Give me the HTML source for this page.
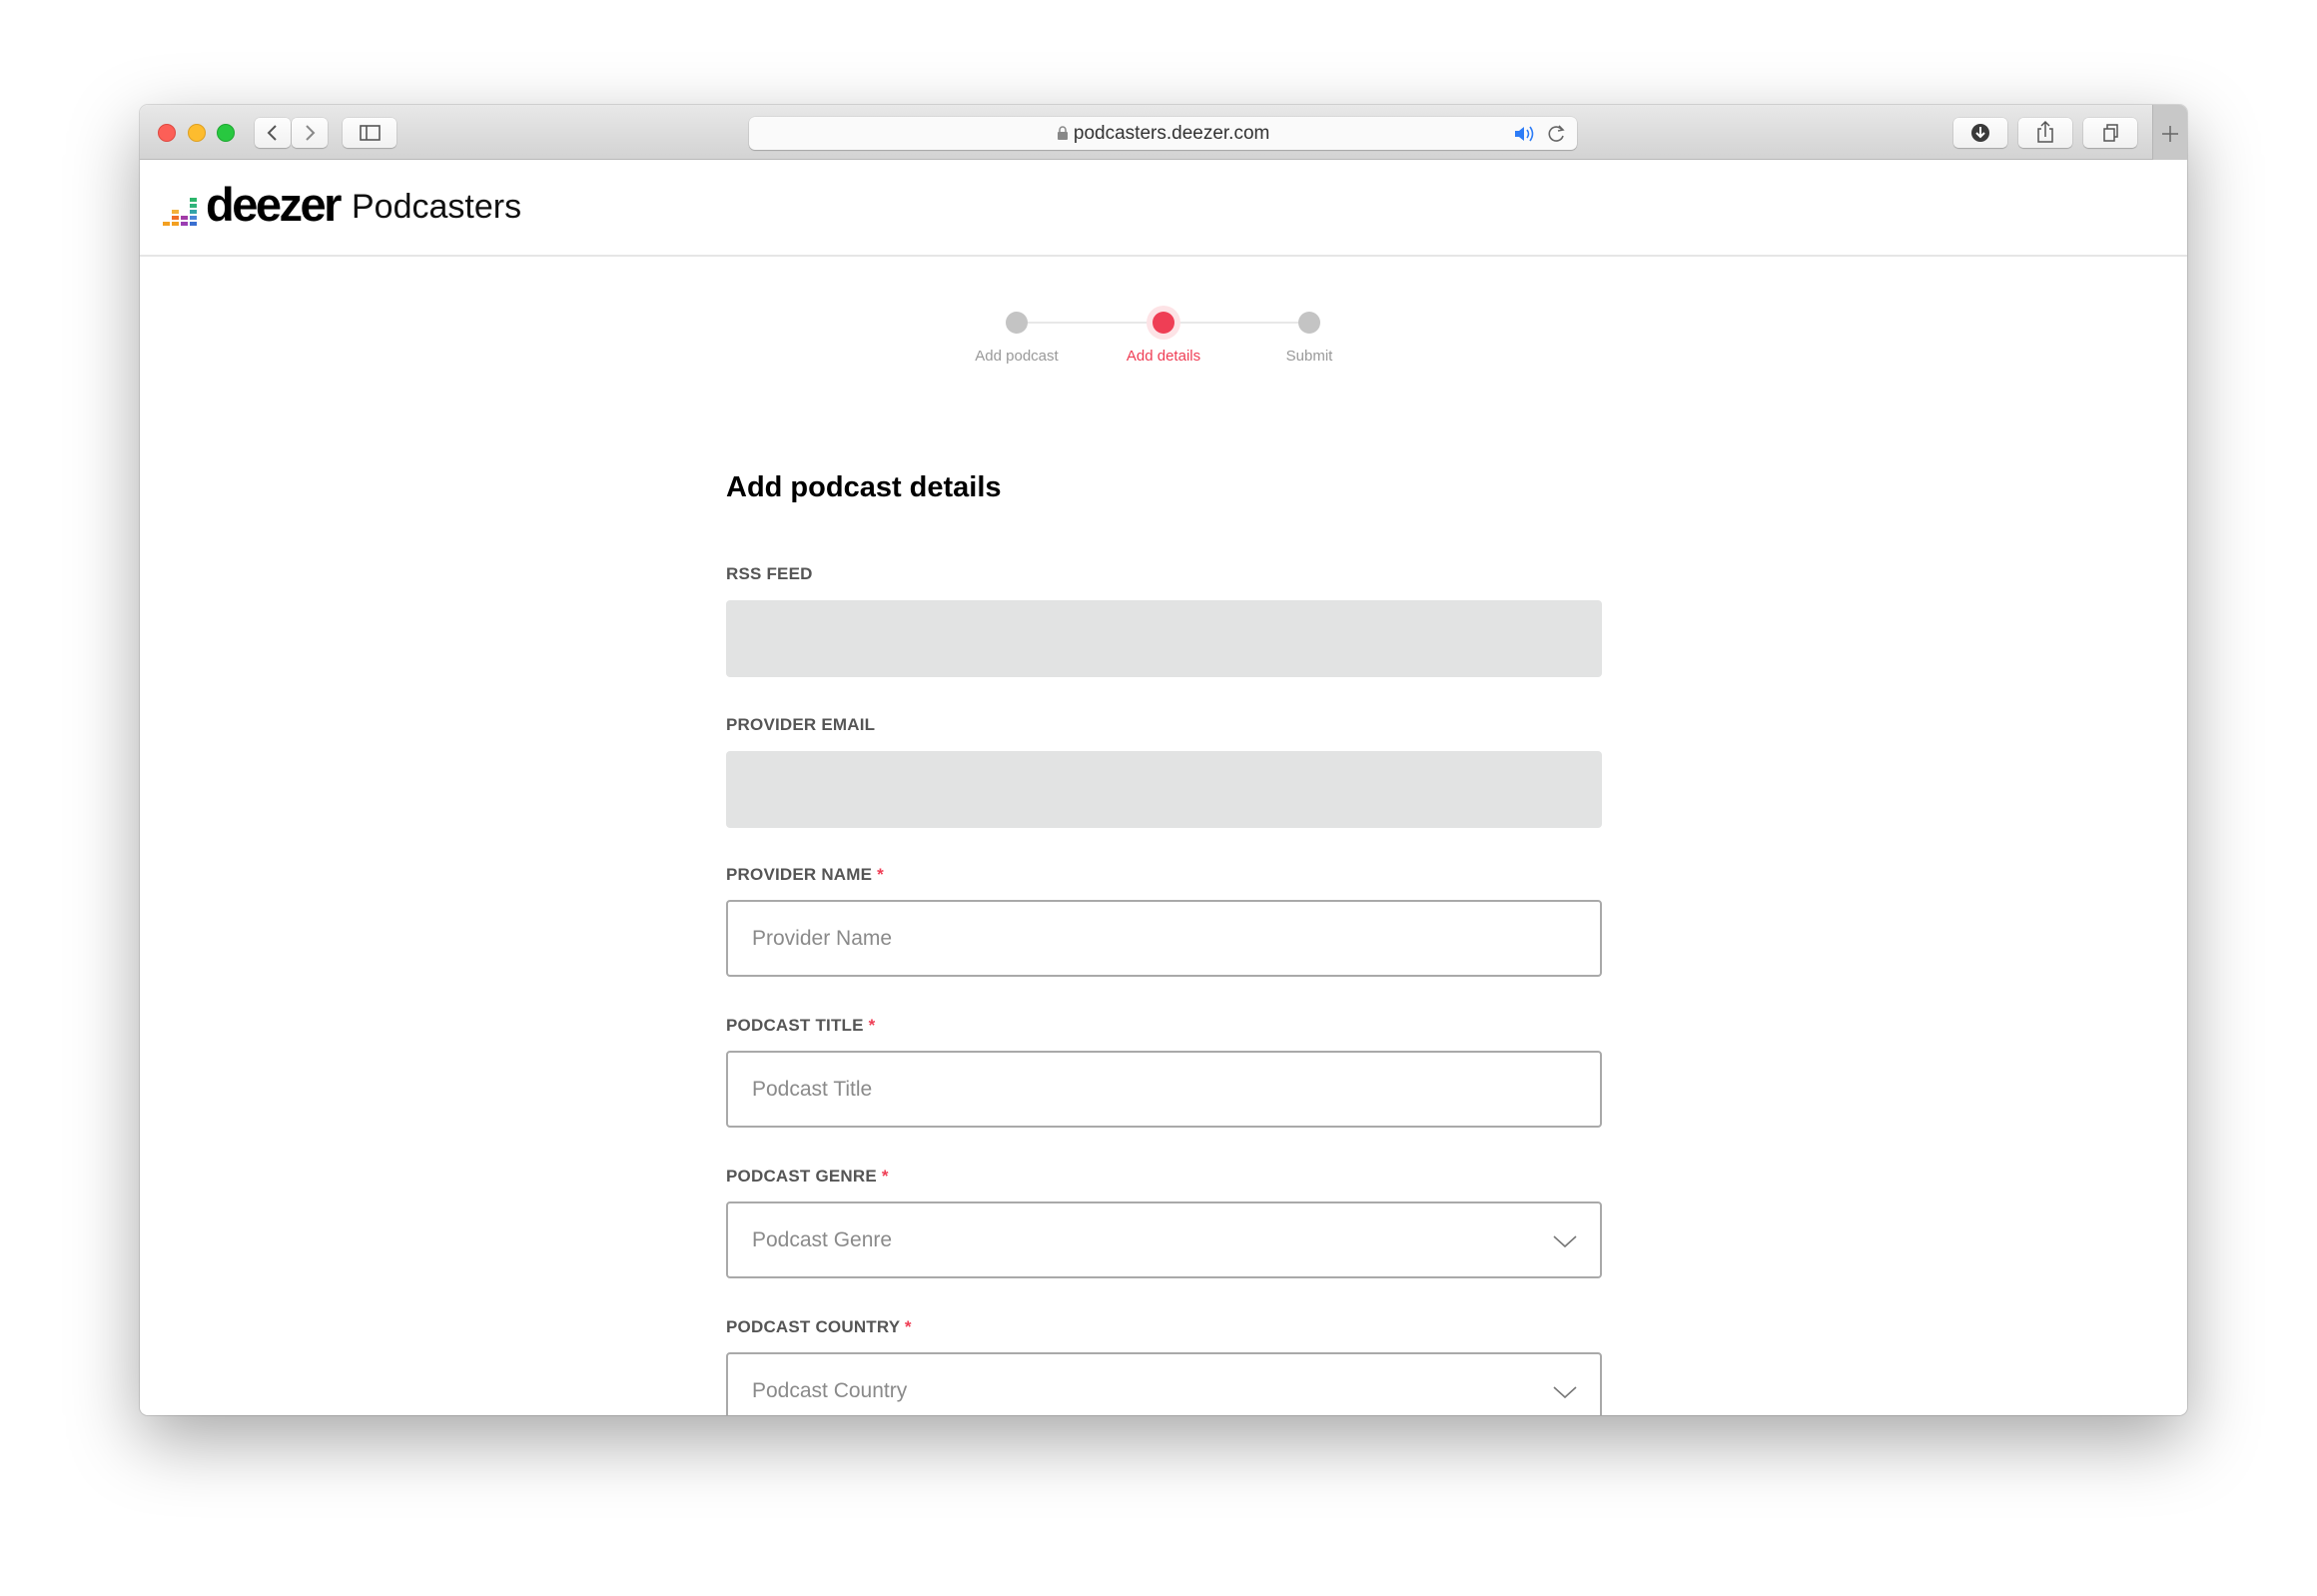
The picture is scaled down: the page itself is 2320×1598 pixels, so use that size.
<!DOCTYPE html>
<html><head><meta charset="utf-8"><style>
*{box-sizing:border-box;margin:0;padding:0}
html,body{width:2320px;height:1598px;background:#fff;overflow:hidden;font-family:"Liberation Sans",sans-serif}
.win{position:absolute;left:140px;top:105px;width:2050px;height:1312px;background:#fff;border-radius:8px;overflow:hidden;box-shadow:0 25px 70px rgba(0,0,0,.35),0 0 0 1px rgba(0,0,0,.12)}
.tb{position:absolute;left:0;top:0;width:100%;height:55px;background:linear-gradient(#e8e8e8,#d3d3d3);border-bottom:1px solid #b8b8b8}
.dot{position:absolute;top:19px;width:18px;height:18px;border-radius:50%}
.btn{position:absolute;top:13px;height:30px;background:linear-gradient(#fdfdfd,#f1f1f1);border-radius:5px;box-shadow:0 1px 1px rgba(0,0,0,.2),0 0 0 .5px rgba(0,0,0,.1)}
.url{position:absolute;left:610px;top:12px;width:829px;height:33px;background:#fafafa;border-radius:6px;box-shadow:0 1px 1px rgba(0,0,0,.2),0 0 0 .5px rgba(0,0,0,.1);font-size:19px;color:#333;text-align:center;line-height:33px}
.hdr{position:absolute;top:55px;left:0;width:100%;height:97px;border-bottom:2px solid #e6e6e6}
.abs{position:absolute}
.lbl{position:absolute;left:587px;font-size:17px;font-weight:bold;color:#555;letter-spacing:.2px}
.lbl b{color:#ef3e55}
.inp{position:absolute;left:587px;width:877px;height:77px;border-radius:4px}
.gray{background:#e2e3e3}
.box{border:2px solid #a9a9a9;background:#fff;font-size:21px;color:#8a8a8a;padding-left:24px;line-height:73px}
.chev{position:absolute;right:22px;top:31px}
.st{position:absolute;font-size:15px;color:#999;text-align:center;width:140px}
</style></head><body>
<div class="win">
 <div class="tb">
  <div class="dot" style="left:18px;background:#fc5f57;border:1px solid #de4a42"></div>
  <div class="dot" style="left:48px;background:#fdbc2e;border:1px solid #dda024"></div>
  <div class="dot" style="left:77px;background:#28c840;border:1px solid #1fa831"></div>
  <div class="btn" style="left:115px;width:36px"><svg width="36" height="30"><path d="M21 8l-7 7 7 7" fill="none" stroke="#555" stroke-width="2"/></svg></div>
  <div class="btn" style="left:152px;width:36px"><svg width="36" height="30"><path d="M15 8l7 7-7 7" fill="none" stroke="#888" stroke-width="2"/></svg></div>
  <div class="btn" style="left:203px;width:54px"><svg width="54" height="30"><rect x="18" y="8" width="19" height="14" fill="none" stroke="#555" stroke-width="1.6"/><line x1="24" y1="8" x2="24" y2="22" stroke="#555" stroke-width="1.6"/></svg></div>
  <div class="url"><svg width="12" height="16" style="vertical-align:-2px"><path d="M3 7V5a3 3 0 0 1 6 0v2" fill="none" stroke="#888" stroke-width="1.5"/><rect x="1" y="7" width="10" height="8" rx="1" fill="#888"/></svg> podcasters.deezer.com
   <svg class="abs" style="right:40px;top:7px" width="24" height="20"><path d="M2 7h4l5-4v14l-5-4H2z" fill="#2d7cf6"/><path d="M14 6q3 4 0 8M17 3q5 7 0 14" fill="none" stroke="#2d7cf6" stroke-width="1.6"/></svg>
   <svg class="abs" style="right:10px;top:7px" width="20" height="20"><path d="M15 6a7 7 0 1 0 1 6" fill="none" stroke="#666" stroke-width="1.6"/><path d="M12 2l4 4-5 1" fill="none" stroke="#666" stroke-width="1.6"/></svg>
  </div>
  <div class="btn" style="left:1816px;width:54px"><svg width="54" height="30"><circle cx="27" cy="15" r="9" fill="#3a3a3a"/><path d="M27 9v10M23 15l4 4 4-4" fill="none" stroke="#fff" stroke-width="2"/></svg></div>
  <div class="btn" style="left:1881px;width:54px"><svg width="54" height="30"><path d="M23 11h-3v13h14V11h-3" fill="none" stroke="#555" stroke-width="1.5"/><path d="M27 19V4M23 8l4-4 4 4" fill="none" stroke="#555" stroke-width="1.5"/></svg></div>
  <div class="btn" style="left:1946px;width:54px"><svg width="54" height="30"><rect x="21" y="11" width="10" height="12" fill="none" stroke="#555" stroke-width="1.5"/><path d="M24 11V7h10v12h-3" fill="none" stroke="#555" stroke-width="1.5"/></svg></div>
  <div class="abs" style="left:2015px;top:0;width:35px;height:55px;background:#c8c8c8;border-left:1px solid #b5b5b5"><svg width="35" height="55"><path d="M17 21v16M9 29h16" stroke="#666" stroke-width="1.5"/></svg></div>
 </div>
 <div class="hdr">
  <svg class="abs" style="left:23px;top:37px" width="40" height="30">
   <rect x="0" y="25" width="7" height="4" fill="#f3a021"/>
   <rect x="9" y="25" width="7" height="4" fill="#f3a021"/><rect x="9" y="19" width="7" height="4" fill="#ef6d27"/><rect x="9" y="13" width="7" height="4" fill="#f3b13a"/>
   <rect x="18" y="25" width="7" height="4" fill="#9b3eb3"/><rect x="18" y="19" width="7" height="4" fill="#a23ba7"/>
   <rect x="27" y="25" width="7" height="4" fill="#3a6fd0"/><rect x="27" y="19" width="7" height="4" fill="#4a84d8"/><rect x="27" y="13" width="7" height="4" fill="#33a3a8"/><rect x="27" y="7" width="7" height="4" fill="#2fb37a"/><rect x="27" y="1" width="7" height="4" fill="#2cb56b"/>
  </svg>
  <div class="abs" style="left:66px;top:17px;font-size:47px;font-weight:bold;letter-spacing:-2.5px;color:#000">deezer</div>
  <div class="abs" style="left:212px;top:28px;font-size:34px;color:#111">Podcasters</div>
 </div>
 <svg class="abs" style="left:860px;top:200px" width="480" height="40">
  <line x1="18" y1="18" x2="311" y2="18" stroke="#e8e8e8" stroke-width="2"/>
  <circle cx="18" cy="18" r="11" fill="#c4c4c4"/>
  <circle cx="165" cy="18" r="17" fill="#fde3e6"/>
  <circle cx="165" cy="18" r="11" fill="#ef3e55"/>
  <circle cx="311" cy="18" r="11" fill="#c4c4c4"/>
 </svg>
 <div class="st" style="left:808px;top:243px">Add podcast</div>
 <div class="st" style="left:955px;top:243px;color:#ef3e55">Add details</div>
 <div class="st" style="left:1101px;top:243px">Submit</div>
 <div class="abs" style="left:587px;top:367px;font-size:29px;font-weight:bold;color:#000">Add podcast details</div>
 <div class="lbl" style="top:460px">RSS FEED</div>
 <div class="inp gray" style="top:496px"></div>
 <div class="lbl" style="top:611px">PROVIDER EMAIL</div>
 <div class="inp gray" style="top:647px"></div>
 <div class="lbl" style="top:761px">PROVIDER NAME <b>*</b></div>
 <div class="inp box" style="top:796px">Provider Name</div>
 <div class="lbl" style="top:912px">PODCAST TITLE <b>*</b></div>
 <div class="inp box" style="top:947px">Podcast Title</div>
 <div class="lbl" style="top:1063px">PODCAST GENRE <b>*</b></div>
 <div class="inp box" style="top:1098px">Podcast Genre<svg class="chev" width="26" height="14"><path d="M2 2l11 10 11-10" fill="none" stroke="#777" stroke-width="1.6"/></svg></div>
 <div class="lbl" style="top:1214px">PODCAST COUNTRY <b>*</b></div>
 <div class="inp box" style="top:1249px">Podcast Country<svg class="chev" width="26" height="14"><path d="M2 2l11 10 11-10" fill="none" stroke="#777" stroke-width="1.6"/></svg></div>
</div>
</body></html>
